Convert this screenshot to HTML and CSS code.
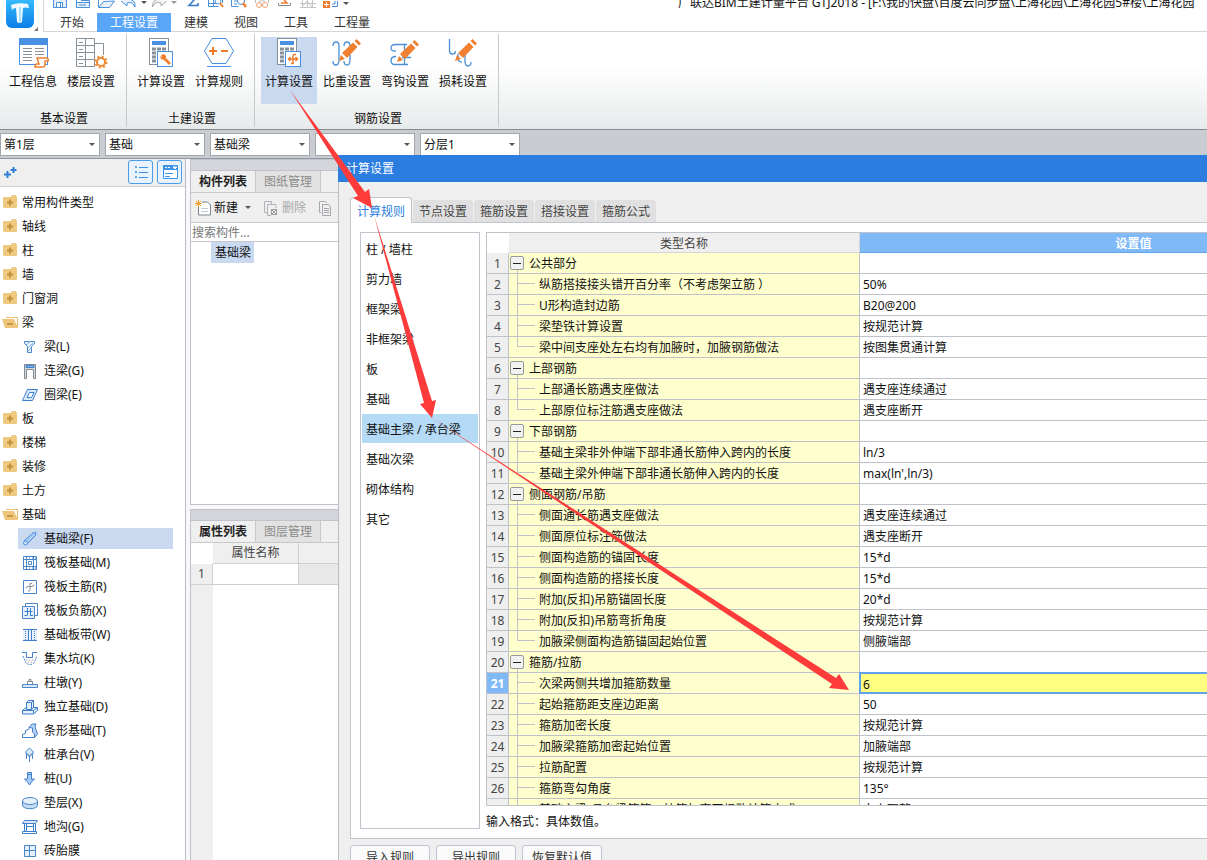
FILE: index.html
```html
<!DOCTYPE html>
<html lang="zh-CN">
<head>
<meta charset="utf-8">
<title>广联达BIM土建计量平台 GTJ2018</title>
<link rel="stylesheet" href="styles.css">
</head>
<body>
<svg class="defs" width="0" height="0" aria-hidden="true">
  <symbol id="folder" viewBox="0 2 18 16"><path d="M10 3l1-1h4l1 2h-6z" fill="#f0cd8b"/><rect x="2" y="4" width="14" height="11" rx="1" fill="#efc97f"/><path d="M9 6.500v6M6 9.500h6" stroke="#c4923a" stroke-width="2"/></symbol>
  <symbol id="folder-open" viewBox="0 2 18 16"><path d="M5 4.500h11.500V14" fill="#fff" stroke="#e9bd6b"/><path d="M1 6h12l4 9H4z" fill="#efc47a"/><path d="M6 11h6" stroke="#b98a3c" stroke-width="1.500"/></symbol>
  <symbol id="pencil" viewBox="0 0 22 22"><path d="M0 22l2-6 4 4z" fill="#f08030"/><path d="M3 14L14 3.500l4.500 4.500L8 19z" fill="#f08030"/><path d="M15.500 2l2-2L22 4.500l-2 2z" fill="#f08030"/></symbol>
  <symbol id="calc" viewBox="0 0 32 32"><rect x="4.500" y="1.500" width="19" height="26" fill="#fff" stroke="#84909a"/><rect x="7" y="4" width="14" height="4" fill="#4a90e2"/><path d="M7 12h14M7 16h10M7 20h6M7 24h6" stroke="#84909a" stroke-width="3" stroke-dasharray="4 1"/></symbol>
</svg>

<div class="app">
  <header>
    <div class="head">
      <div class="logo">
        <svg width="38" height="32" viewBox="0 0 38 32"><defs><linearGradient id="lg" x1="0" y1="0" x2="0" y2="1"><stop offset="0" stop-color="#3cc6ff"/><stop offset="1" stop-color="#0a7ee8"/></linearGradient></defs><rect x="6" y="-5" width="28" height="33" rx="6" fill="url(#lg)"/><path d="M11 5q7-3 17-1l1 4q-4-1-6 0l-1 14q-2 2-5 0l-1-14q-3 0-4 2z" fill="#fff" opacity=".94"/><path d="M20 7v15" stroke="#a9e2ff" stroke-width="2"/><path d="M38 27v4h-4z" fill="#777"/></svg>
      </div>
      <div class="head-main">
        <div class="titlebar">
          <div class="quick">
            <svg width="18" height="9"><path d="M2.500 0v7.500h13V0M5.500 7V2.500h6V7M9.500 3v4" fill="#e6f0fb" stroke="#4a90d9"/></svg>
            <svg width="18" height="9"><path d="M2.500 0v7.500h13V2.500h-13M7 .5h8.500V3M5 5h7" fill="#e6f0fb" stroke="#4a90d9"/></svg>
            <svg width="18" height="9"><path d="M1.500 7.500l5-6 11-.5-5 6.500zM1.500 7V0" fill="#e6f0fb" stroke="#4a90d9"/></svg>
            <svg width="18" height="9"><path d="M1 1l6 5V3q6-2 8 4Q16-1 7-1" fill="#e6f0fb" stroke="#4a90d9"/></svg>
            <svg class="caret" width="6" height="9"><path d="M0 1h6L3 4z" fill="#555"/></svg>
            <svg width="18" height="9"><path d="M17 1l-6 5V3Q5 1 2.500 7Q2-1 11-1" fill="#f3f3f3" stroke="#aaa"/></svg>
            <svg class="caret caret-redo" width="6" height="9"><path d="M0 1h6L3 4z" fill="#999"/></svg>
            <svg width="18" height="9"><path d="M8-3l2 3-5 5.500h9V3" fill="none" stroke="#3979c5" stroke-width="1.600"/></svg>
            <svg width="18" height="9"><path d="M1.500 0v6.500h10M6.500 0v6M1 3.500h8M15.500 0v3" fill="none" stroke="#4a90d9"/><circle cx="11" cy="1" r="3" fill="#fff" stroke="#4a90d9"/><path d="M13 3l3 4" stroke="#ee8030" stroke-width="2"/></svg>
            <svg width="18" height="9"><path d="M1.500 0v6.500h7M4 1h3M4 4h3" fill="none" stroke="#4a90d9"/><circle cx="11" cy="1" r="3.500" fill="#fff" stroke="#4a90d9"/><path d="M13 3l3 4" stroke="#ee8030" stroke-width="2.500"/></svg>
            <svg width="18" height="9"><path d="M2.500 0v3M15.500 0v3M6 1h6" stroke="#bbb"/><circle cx="6" cy="5" r="2.500" fill="#fff" stroke="#f0a070"/><circle cx="12" cy="5" r="2.500" fill="#fff" stroke="#f0a070"/></svg>
            <svg width="18" height="9"><path d="M2.500 3v2.500h12V3" fill="none" stroke="#888"/><path d="M5 3h6L8 0" fill="none" stroke="#ee8030" stroke-width="1.500"/></svg>
            <svg width="18" height="9"><path d="M1 7.500h16M1 3.500h16M3.500 0v8M8.500 0v8M13.500 0v8M3 7l5-6 5 6" fill="none" stroke="#c4c4c4"/></svg>
            <svg width="18" height="9"><rect x="1" y="1" width="7" height="7" fill="#ee7b2d"/><path d="M4.500 2v5M2 4.500h5" stroke="#fff"/><path d="M10 6.500h5.500V1M13 1v3h-3" fill="none" stroke="#4a90d9"/></svg>
            <svg class="caret" width="6" height="9"><path d="M0 2h6L3 5z" fill="#555"/></svg>
          </div>
          <h1>广联达BIM土建计量平台 GTJ2018 - [F:\我的快盘\百度云同步盘\上海花园\上海花园5#楼\上海花园</h1>
        </div>
        <nav class="menu">
          <button>开始</button><button class="active">工程设置</button><button>建模</button><button>视图</button><button>工具</button><button>工程量</button>
        </nav>
      </div>
    </div>
    <div class="ribbon">
      <section>
        <div class="tools">
          <button><svg width="32" height="32"><rect x="2.500" y="1.500" width="28" height="26" fill="#fff" stroke="#4a90e2"/><rect x="2" y="1" width="29" height="7" fill="#4a90e2"/><path d="M6 11.500h9M18 11.500h9M6 14.500h9M18 14.500h9M6 17.500h9M18 17.500h9M6 20.500h9M6 23.500h9" stroke="#8a8f94"/><path d="M20 21h9q3 0 2 3h-3v3q0 3-2 3h-8q0-3 2-3h2z" fill="#fff" stroke="#ee8030" stroke-width="1.500"/></svg>工程信息</button>
          <button><svg width="34" height="32"><path d="M2.500 1.500h18v28h-18zM2 8.500h18M2 15.500h18M2 22.500h18M11.500 2v27M20 6.500h9.500V18" fill="#fff" stroke="#87919a"/><path d="M5 5.500h4M5 12.500h4M5 19.500h4M5 26.500h4" stroke="#87919a"/><circle cx="27" cy="25" r="4" fill="#fff" stroke="#ee8a30" stroke-width="2"/><circle cx="27" cy="25" r="5.500" fill="none" stroke="#ee8a30" stroke-width="2" stroke-dasharray="2 2.300"/></svg>楼层设置</button>
        </div>
        <h2>基本设置</h2>
      </section>
      <section>
        <div class="tools">
          <button><svg width="32" height="32"><use href="#calc"/><rect x="12.500" y="14.500" width="15" height="15" fill="#fff" stroke="#4a90e2"/><path d="M16 18l3-1 2 2v2l5 5-2 2-5-5-3-1-1-3 2 1z" fill="#ee8030"/></svg>计算设置</button>
          <button><svg width="32" height="32"><path d="M9 1.500h14L30.500 14 23 26.500H9L1.500 14z" fill="#fff" stroke="#4a90e2"/><path d="M4 29.500h24" stroke="#4a90e2"/><path d="M6 14h8M10 10v8M18 14h7" stroke="#ee7b2d" stroke-width="2"/></svg>计算规则</button>
        </div>
        <h2>土建设置</h2>
      </section>
      <section>
        <div class="tools">
          <button class="active"><svg width="32" height="32"><use href="#calc"/><rect x="12.500" y="14.500" width="15" height="15" fill="#fff" stroke="#4a90e2"/><path d="M20 18v8M15.500 22h9M17.500 20l-2 2 2 2M22.500 20l2 2-2 2M18 26.500h3M20 17.500h3" fill="none" stroke="#ee7b2d" stroke-width="1.500"/></svg>计算设置</button>
          <button><svg width="32" height="32"><path d="M2 9q0-4 3-4t3 4v14q0 5-3 5t-3-4M13 9q0-4 3-4t3 4v14q0 5-3 5t-3-4" fill="none" stroke="#4a8fd6" stroke-width="1.300"/><use href="#pencil" x="8" y="2" width="22" height="22"/></svg>比重设置</button>
          <button><svg width="32" height="32"><path d="M18 7.500H6q-4 0-4 3.500t5 3M19 27.500H6q-4 0-4-4t5-4M15.500 8v20M13 20.500h9" fill="none" stroke="#4a8fd6" stroke-width="1.300"/><use href="#pencil" x="8" y="3" width="22" height="22"/></svg>弯钩设置</button>
          <button><svg width="32" height="32"><path d="M2.500 2v12q0 3 3 3t3-3M11 17v4q0 4 4 4M18 16v8q0 5 3 5t3-4" fill="none" stroke="#4a8fd6" stroke-width="1.300"/><use href="#pencil" x="8" y="2" width="22" height="22"/></svg>损耗设置</button>
        </div>
        <h2>钢筋设置</h2>
      </section>
    </div>
  </header>

  <div class="filters">
    <label><select aria-label="楼层"><option>第1层</option></select></label>
    <label><select aria-label="类别"><option>基础</option></select></label>
    <label><select aria-label="类型"><option>基础梁</option></select></label>
    <label><select aria-label="构件"><option></option></select></label>
    <label><select aria-label="分层"><option>分层1</option></select></label>
  </div>

  <main>
    <aside class="nav">
      <div class="nav-bar">
        <svg width="16" height="16"><path d="M4.500 7v7M1 10.500h7M10.500 3v6M7.500 6h6" stroke="#2f7fd6" stroke-width="2"/></svg>
        <span class="spring"></span>
        <button aria-label="列表视图" class="on"><svg width="16" height="16"><path d="M6 3.500h9M6 8.500h9M6 13.500h9M2.500 2.500h1v1h-1zM2.500 7.500h1v1h-1zM2.500 12.500h1v1h-1z" fill="none" stroke="#3c93e8"/></svg></button>
        <button aria-label="面板视图" class="on"><svg width="16" height="16"><path d="M1.500 1.500h14v13h-14z" fill="#fff" stroke="#3c93e8"/><path d="M1 1h15v5H1z" fill="#3c93e8"/><path d="M3 3.500h2M6 3.500h2M11 3h4l-2 2z" stroke="#fff" fill="#fff"/><path d="M3 9.500h8M3 12.500h5" stroke="#3c93e8"/></svg></button>
      </div>
      <ul class="tree">
        <li class="group"><svg width="18" height="16"><use href="#folder"/></svg>常用构件类型</li>
        <li class="group"><svg width="18" height="16"><use href="#folder"/></svg>轴线</li>
        <li class="group"><svg width="18" height="16"><use href="#folder"/></svg>柱</li>
        <li class="group"><svg width="18" height="16"><use href="#folder"/></svg>墙</li>
        <li class="group"><svg width="18" height="16"><use href="#folder"/></svg>门窗洞</li>
        <li class="group"><svg width="18" height="16"><use href="#folder-open"/></svg>梁</li>
        <li class="leaf"><svg width="16" height="16"><path d="M2.500 2.500h10v2l-3 3v6h-4v-6l-3-3z" fill="#e6f0fb" stroke="#4a86c8"/><path d="M4 6l5-4M6 9l5-5M6 12l3-3" stroke="#8db5e2"/></svg>梁(L)</li>
        <li class="leaf"><svg width="16" height="16"><path d="M2.500 1.500h11v14h-2V6.500h-7v9h-2z" fill="#d5d9dd" stroke="#848c94"/><path d="M4 2.500h8v2H4z" fill="#8bbcf0" stroke="#3f7fcc"/></svg>连梁(G)</li>
        <li class="leaf"><svg width="16" height="16"><path d="M5.500 2.500h10l-5 11h-10z" fill="#d8e8f9" stroke="#3f7fcc"/><path d="M7.500 5.500h4.500l-2.500 5H5z" fill="#fff" stroke="#3f7fcc"/></svg>圈梁(E)</li>
        <li class="group"><svg width="18" height="16"><use href="#folder"/></svg>板</li>
        <li class="group"><svg width="18" height="16"><use href="#folder"/></svg>楼梯</li>
        <li class="group"><svg width="18" height="16"><use href="#folder"/></svg>装修</li>
        <li class="group"><svg width="18" height="16"><use href="#folder"/></svg>土方</li>
        <li class="group"><svg width="18" height="16"><use href="#folder-open"/></svg>基础</li>
        <li class="leaf active"><svg width="16" height="16"><path d="M2 10L11 2l3-.5-.5 3L5 13z" fill="#a8cdf5" stroke="#4a90e2"/><circle cx="3.500" cy="12" r="2" fill="#d8e8f9" stroke="#4a90e2"/></svg>基础梁(F)</li>
        <li class="leaf"><svg width="16" height="16"><path d="M1.500 1.500h13v13h-13zM4.500 1v14M11.500 1v14M1 4.500h14M1 11.500h14M6.500 6.500h3v3h-3z" fill="none" stroke="#4a86c8"/><path d="M1 3h14M1 13h14" stroke="#4a86c8" stroke-dasharray="1 2"/></svg>筏板基础(M)</li>
        <li class="leaf"><svg width="16" height="16"><path d="M1.500 1.500h13v13h-13z" fill="#fff" stroke="#4a86c8"/><path d="M8 11.500V4.500h2M4 9.500q0-2 2-2h4q2 0 2-2M6 12h2" fill="none" stroke="#8a9299"/></svg>筏板主筋(R)</li>
        <li class="leaf"><svg width="16" height="16"><path d="M3.500 3V.5h12v12H13" fill="none" stroke="#4a86c8"/><path d="M.5 3.500h12v12H.5z" fill="#e6f0fb" stroke="#4a86c8"/><path d="M5.500 5v7M8.500 5v7M2.500 8.500h8M2.500 12.500h3M8 12.500h3" stroke="#3f7fcc"/></svg>筏板负筋(X)</li>
        <li class="leaf"><svg width="16" height="16"><path d="M1 3h14v10H1z" fill="#e6f0fb"/><path d="M1 2.500h14M1 13.500h14M6.500 3v10M9.500 3v10" stroke="#3f7fcc"/><path d="M3.500 4v9M12.500 4v9" stroke="#4a86c8" stroke-dasharray="1 1"/></svg>基础板带(W)</li>
        <li class="leaf"><svg width="16" height="16"><path d="M0 1.500h4.500v5h6v-5H15" fill="none" stroke="#3f7fcc"/><path d="M1 5l3 7q4 3 8 0l3-7" fill="none" stroke="#4a86c8" stroke-dasharray="2 1"/><path d="M4 9h8M6 11h5" stroke="#999" stroke-dasharray="1 2"/></svg>集水坑(K)</li>
        <li class="leaf"><svg width="16" height="16"><path d="M.5 9.500h15v3H.5z" fill="#d8e8f9" stroke="#4a86c8"/><path d="M5.500 9V6.500h5V9M7 6V4.500h2V6" fill="none" stroke="#888"/></svg>柱墩(Y)</li>
        <li class="leaf"><svg width="16" height="16"><path d="M.5 11.500l3.500-3h11.500v3l-4 3.500H.5z" fill="#e6f0fb" stroke="#3f7fcc"/><path d="M4.500 3.500l2-2h5v7l-2 2h-5z" fill="#e6f0fb" stroke="#3f7fcc"/><path d="M4.500 3.500h5v7l2-2v-7l-2 2M.5 11.500h11v3M11.500 11.500l4-3" fill="none" stroke="#3f7fcc"/></svg>独立基础(D)</li>
        <li class="leaf"><svg width="16" height="16"><path d="M7 4.500L10 1h4l-1 3 2.500 7-3.500 4z" fill="#b9d4f3" stroke="#3f7fcc"/><path d="M.5 14.500v-3l3-1v-3l3-1 1-2 3 .5v4l2 2v3.500z" fill="#fff" stroke="#3f7fcc"/></svg>条形基础(T)</li>
        <li class="leaf"><svg width="16" height="16"><path d="M7.500 1l4 4-4 4-4-4z" fill="#d8e8f9" stroke="#4a86c8"/><path d="M7.500 9v6M4.500 7v5M10.500 7v5M3.500 6l4 4 4-4" fill="none" stroke="#4a86c8"/></svg>桩承台(V)</li>
        <li class="leaf"><svg width="16" height="16"><path d="M5.500 1.500h4v6.500h3l-3 3-2 3-2-3-3-3h3z" fill="#a8cdf5" stroke="#3f7fcc"/><path d="M5.500 3.500h4v5" fill="none" stroke="#3f7fcc"/></svg>桩(U)</li>
        <li class="leaf"><svg width="16" height="16"><path d="M.5 6v4c0 5 15 5 15 0V6" fill="#c5dcf5" stroke="#4a86c8"/><ellipse cx="8" cy="6" rx="7.500" ry="3.500" fill="#e6f0fb" stroke="#4a86c8"/></svg>垫层(X)</li>
        <li class="leaf"><svg width="16" height="16"><path d="M2.500 1.500h13l-2 3H.5z" fill="#d8e8f9" stroke="#3f7fcc"/><path d="M2.500 5v8M4.500 5v8M11.500 5v8M13.500 5v8M.5 12.500h14v2H.5zM5 7.500h6" fill="none" stroke="#3f7fcc"/></svg>地沟(G)</li>
        <li class="leaf"><svg width="16" height="16"><path d="M2.500 2.500h11v11h-11zM7.500 3v10M3 7.500h10" fill="#e6f0fb" stroke="#4a86c8"/></svg>砖胎膜</li>
      </ul>
    </aside>

    <div class="docks">
      <section class="dock dock-list">
        <div class="dock-grip"></div>
        <div class="dock-tabs"><button class="active">构件列表</button><button>图纸管理</button></div>
        <div class="dock-tools">
          <button><svg width="16" height="16"><path d="M3.500 5v10h12V5l-3-3H7" fill="#fff" stroke="#7d8790"/><path d="M6 8.500h7M6 11.500h7" stroke="#c8ccd0"/><path d="M1 1l5 5M6 1L1 6M3.500 0v7M0 3.500h7" stroke="#f0a030"/></svg>新建<span class="down"></span></button>
          <button disabled><svg width="16" height="16"><path d="M4 12.500H1.500v-11h7V4" fill="none" stroke="#b0b4b8"/><path d="M13 8V4.500H4.500v11H8" fill="none" stroke="#b0b4b8"/><path d="M8 9l6 6M14 9l-6 6M8.500 9.500h5v5h-5z" fill="none" stroke="#a0a0a0"/></svg>删除</button>
          <button disabled aria-label="复制"><svg width="16" height="16"><path d="M3 12.500H1.500v-11h6L9 3" fill="none" stroke="#a4a8ac"/><path d="M4.500 4.500h6l2 2v9h-8zM6 8.500h5M6 10.500h5M6 12.500h5" fill="none" stroke="#a4a8ac"/></svg></button>
        </div>
        <input class="search" placeholder="搜索构件..." aria-label="搜索构件">
        <div class="results"><span>基础梁</span></div>
      </section>
      <section class="dock dock-props">
        <div class="dock-grip"></div>
        <div class="dock-tabs"><button class="active">属性列表</button><button>图层管理</button></div>
        <table class="props">
          <thead><tr><td class="corner"></td><th>属性名称</th><th></th></tr></thead>
          <tbody><tr><th>1</th><td></td><td class="shade"></td></tr><tr class="rest"><th></th><td colspan="2"></td></tr></tbody>
        </table>
      </section>
    </div>
  </main>

  <section class="dialog" role="dialog" aria-label="计算设置">
    <div class="dialog-title">计算设置</div>
    <div class="dialog-body">
      <div class="tabs"><button class="active">计算规则</button><button>节点设置</button><button>箍筋设置</button><button>搭接设置</button><button>箍筋公式</button></div>
      <div class="panel">
        <ul class="cats"><li>柱 / 墙柱</li><li>剪力墙</li><li>框架梁</li><li>非框架梁</li><li>板</li><li>基础</li><li class="active">基础主梁 / 承台梁</li><li>基础次梁</li><li>砌体结构</li><li>其它</li></ul>
        <div class="rules">
          <div class="grid-wrap">
            <table class="grid">
              <colgroup><col class="c-num"><col class="c-name"><col class="c-val"></colgroup>
              <thead><tr><td></td><th>类型名称</th><th class="sel">设置值</th></tr></thead>
              <tbody>
                <tr class="g"><th>1</th><td><button aria-label="折叠"></button>公共部分</td><td></td></tr>
                <tr><th>2</th><td>纵筋搭接接头错开百分率（不考虑架立筋 ）</td><td>50%</td></tr>
                <tr><th>3</th><td>U形构造封边筋</td><td>B20@200</td></tr>
                <tr><th>4</th><td>梁垫铁计算设置</td><td>按规范计算</td></tr>
                <tr class="last"><th>5</th><td>梁中间支座处左右均有加腋时，加腋钢筋做法</td><td>按图集贯通计算</td></tr>
                <tr class="g"><th>6</th><td><button aria-label="折叠"></button>上部钢筋</td><td></td></tr>
                <tr><th>7</th><td>上部通长筋遇支座做法</td><td>遇支座连续通过</td></tr>
                <tr class="last"><th>8</th><td>上部原位标注筋遇支座做法</td><td>遇支座断开</td></tr>
                <tr class="g"><th>9</th><td><button aria-label="折叠"></button>下部钢筋</td><td></td></tr>
                <tr><th>10</th><td>基础主梁非外伸端下部非通长筋伸入跨内的长度</td><td>ln/3</td></tr>
                <tr class="last"><th>11</th><td>基础主梁外伸端下部非通长筋伸入跨内的长度</td><td>max(ln',ln/3)</td></tr>
                <tr class="g"><th>12</th><td><button aria-label="折叠"></button>侧面钢筋/吊筋</td><td></td></tr>
                <tr><th>13</th><td>侧面通长筋遇支座做法</td><td>遇支座连续通过</td></tr>
                <tr><th>14</th><td>侧面原位标注筋做法</td><td>遇支座断开</td></tr>
                <tr><th>15</th><td>侧面构造筋的锚固长度</td><td>15*d</td></tr>
                <tr><th>16</th><td>侧面构造筋的搭接长度</td><td>15*d</td></tr>
                <tr><th>17</th><td>附加(反扣)吊筋锚固长度</td><td>20*d</td></tr>
                <tr><th>18</th><td>附加(反扣)吊筋弯折角度</td><td>按规范计算</td></tr>
                <tr class="last"><th>19</th><td>加腋梁侧面构造筋锚固起始位置</td><td>侧腋端部</td></tr>
                <tr class="g"><th>20</th><td><button aria-label="折叠"></button>箍筋/拉筋</td><td></td></tr>
                <tr class="current"><th>21</th><td>次梁两侧共增加箍筋数量</td><td><input value="6" aria-label="次梁两侧共增加箍筋数量"></td></tr>
                <tr><th>22</th><td>起始箍筋距支座边距离</td><td>50</td></tr>
                <tr><th>23</th><td>箍筋加密长度</td><td>按规范计算</td></tr>
                <tr><th>24</th><td>加腋梁箍筋加密起始位置</td><td>加腋端部</td></tr>
                <tr><th>25</th><td>拉筋配置</td><td>按规范计算</td></tr>
                <tr><th>26</th><td>箍筋弯勾角度</td><td>135°</td></tr>
                <tr><th>27</th><td>基础主梁/承台梁箍筋、拉筋加密区根数计算方式</td><td>向上取整+1</td></tr>
              </tbody>
            </table>
          </div>
          <p class="hint">输入格式：具体数值。</p>
        </div>
      </div>
      <div class="actions"><button>导入规则</button><button>导出规则</button><button>恢复默认值</button></div>
    </div>
  </section>

  <svg class="arrows" width="860" height="700" viewBox="0 0 860 700" fill="#fc3b3a" aria-hidden="true">
    <path d="M290 90L365 192l4-3 3 19-19-10 5-2z"/>
    <path d="M374 215L432 401l4-1-4 18-12-14 4-1z"/>
    <path d="M432 418L836 678l3-4 10 16-20-2 3-4z"/>
  </svg>
</div>
</body>
</html>
```
FILE: styles.css
```css
* { box-sizing: border-box; }
body, h1, h2, p, ul { margin: 0; padding: 0; }
body, button, input, select { font: 12px/16px "Noto Sans", "Noto Sans CJK SC", sans-serif; color: #111; }
ul { list-style: none; }
button { padding: 0; border: 0; background: none; white-space: nowrap; }
svg { flex: none; }
.defs { position: absolute; }

.app { position: relative; display: flex; flex-direction: column; height: 100vh; overflow: hidden; background: #fff; }

/* title, menu */
.head { display: flex; height: 32px; }
.logo { width: 43px; flex: none; }
.head-main { flex: 1; min-width: 0; border-left: 1px solid #d5d5d5; border-bottom: 1px solid #d5d5d5; }
.titlebar { display: flex; align-items: flex-end; justify-content: space-between; height: 13px; overflow: hidden; }
.quick { display: flex; gap: 5px; padding-left: 7px; align-self: flex-start; }
.quick .caret { margin: 0 -2px; }
.quick .caret-redo { margin-right: 2px; }
h1 { width: 529px; font-size: 12px; font-weight: 400; white-space: nowrap; padding-bottom: 2px; }
.menu { display: flex; padding-left: 3px; }
.menu button { height: 19px; padding: 0 13px; color: #333; }
.menu .active { background: #59a5f8; color: #fff; }

/* ribbon */
.ribbon { display: flex; height: 97px; padding-top: 2px; background: linear-gradient(#fff 35%, #e7eaeb); }
.ribbon section { display: flex; flex-direction: column; justify-content: space-between; padding: 3px 7px 0 6px; margin-bottom: 2px; border-right: 1px solid #c6cacd; }
.ribbon section:first-child { padding-left: 5px; }
.tools { display: flex; gap: 2px; }
.tools button { display: flex; flex-direction: column; align-items: center; gap: 5px; width: 56px; height: 67px; }
.tools .active { background: #c8d9f0; }
h2 { padding-left: 4px; font-size: 12px; font-weight: 400; text-align: center; }

/* filter row */
.filters { display: flex; flex: none; gap: 5px; height: 30px; padding-top: 3px; background: #c9cdd2; border-top: 1px solid #868b92; border-bottom: 1px solid #9095a0; }
.filters label { position: relative; width: 100px; height: 23px; }
.filters select { appearance: none; width: 100%; height: 100%; padding: 0 3px; border: 1px solid #a4a8ae; border-radius: 0; background: #fff; }
.filters label::after { content: ""; position: absolute; right: 5px; top: 10px; border: 3px solid transparent; border-top-color: #555; border-bottom: 0; }

main { display: flex; flex: 1; min-height: 0; gap: 4px; background: #f8f8f8; }

/* component tree */
.nav { width: 186px; flex: none; background: #fff; border-right: 1px solid #b9bcc2; overflow: hidden; }
.nav-bar { display: flex; align-items: center; gap: 4px; height: 28px; padding: 0 3px 2px; background: #efefef; border-bottom: 1px solid #cfcfcf; }
.spring { flex: 1; }
.nav-bar .on { display: grid; place-items: center; width: 25px; height: 24px; border: 1px solid #4a9cec; border-radius: 3px; background: #e9f3fd; }
.tree { display: flex; flex-direction: column; padding-top: 3px; }
.tree li { display: flex; flex: none; align-items: center; }
.group { height: 24px; gap: 3px; padding: 2px 0 0 1px; }
.leaf { height: 21px; margin: 2px 12px 1px 18px; gap: 6px; padding-left: 4px; }
.tree .active { background: #c9d9f0; }

/* docked panels */
.docks { display: flex; flex-direction: column; gap: 4px; width: 149px; }
.dock { display: flex; flex-direction: column; border: 1px solid #c0c3ca; border-right: 0; background: #fff; overflow: hidden; }
.dock-list { flex: 0 0 346px; }
.dock-props { flex: 1; border-bottom: 0; }
.dock-grip { flex: none; height: 11px; background: #d4d6dc; border-bottom: 1px solid #c0c3ca; }
.dock-tabs { display: flex; flex: none; height: 22px; background: #efefef; border-bottom: 1px solid #c6c8cc; }
.dock-tabs button { width: 65px; background: #e2e2e2; color: #8b8b8b; border-right: 1px solid #c6c8cc; }
.dock-tabs .active { background: #efefef; color: #222; font-weight: 700; }
.dock-tools { display: flex; flex: none; align-items: center; gap: 12px; height: 30px; padding-left: 4px; background: #efefef; border-bottom: 1px solid #c6c8cc; }
.dock-tools button { display: flex; align-items: center; gap: 3px; }
.dock-tools button:disabled { color: #a8a8a8; }
.down { margin-left: 4px; border: 3px solid transparent; border-top-color: #555; border-bottom: 0; }
.search { flex: none; height: 19px; padding: 0 1px; border: 0; border-bottom: 1px solid #c6c8cc; }
.search::placeholder { color: #777; }
.results { padding-left: 20px; }
.results span { display: inline-block; padding: 3px 3px 2px 4px; background: #c9d9f0; }
.props { flex: 1; border-spacing: 0; table-layout: fixed; width: 100%; }
.props th { background: #efefef; font-weight: 400; color: #444; }
.props th, .props td { padding: 0; height: 21px; border-right: 1px solid #cdcfd3; border-bottom: 1px solid #cdcfd3; }
.props tr > :first-child { width: 22px; }
.props tr > :nth-child(2) { width: 86px; }
.props .corner { border: 0; }
.props .shade { background: #e8e8e8; }
.props .rest > * { height: auto; border: 0; }

/* settings window */
.dialog { position: absolute; left: 338px; right: 0; top: 155px; bottom: -14px; display: flex; flex-direction: column; background: #efefef; overflow: hidden; }
.dialog-title { flex: none; height: 27px; padding: 6px 8px; background: #2b7ee0; color: #fff; }
.dialog-body { display: flex; flex: 1; flex-direction: column; min-height: 0; padding: 15px 0 3px 11px; border-left: 1px solid #b9bcc2; }
.tabs { display: flex; flex: none; align-items: flex-end; gap: 1px; height: 26px; padding-bottom: 1px; margin-bottom: -1px; }
.tabs button { width: 60px; height: 22px; padding-top: 2px; background: #e0e0e0; border-radius: 3px 3px 0 0; color: #444; }
.tabs .active { position: relative; width: 62px; height: 26px; margin-bottom: -1px; background: #fff; border: 1px solid #c0c4cc; border-bottom: 0; color: #2b7ee0; }
.panel { display: flex; flex: 1; gap: 6px; min-height: 0; padding: 9px 0 9px 9px; background: #fff; border: 1px solid #c0c4cc; border-right: 0; }
.cats { flex: none; width: 120px; padding: 1px; border: 1px solid #c0c4cc; }
.cats li { height: 29px; margin-bottom: 1px; padding: 8px 4px 5px; white-space: nowrap; }
.cats .active { background: #b4daf6; }
.rules { display: flex; flex: 1; flex-direction: column; min-width: 0; }
.grid-wrap { flex: 1; min-height: 0; overflow: hidden; border: 1px solid #bfc2c8; border-right: 0; }
.grid { width: 921px; table-layout: fixed; border-spacing: 0; }
.c-num { width: 22px; }
.c-name { width: 351px; }
.grid th, .grid td { height: 21px; padding: 2px 3px 0; line-height: 16px; white-space: nowrap; border-right: 1px solid #bfc2c8; border-bottom: 1px solid #bfc2c8; }
.grid th { padding: 2px 0 0; background: #efefef; color: #444; font-weight: 400; text-align: center; }
.grid thead th, .grid thead td { height: 20px; border-color: #d5d5d5; }
.grid thead td { border: 0; }
.grid thead .sel { background: #80b9f8; border-color: #5fa3ec; color: #fff; font-weight: 700; }
.grid tbody td:nth-child(2) {
  padding-left: 30px;
  background: linear-gradient(#bfc2c8, #bfc2c8) 8px 0 / 1px 100% no-repeat, linear-gradient(#bfc2c8, #bfc2c8) 8px 9px / 18px 1px no-repeat, #ffffce;
}
.grid .last td:nth-child(2) { background-size: 1px 9px, 18px 1px, auto; }
.grid .g td:nth-child(2) { padding-left: 1px; background: linear-gradient(#bfc2c8, #bfc2c8) 8px 17px / 1px 4px no-repeat, #ffffce; }
.g button { width: 14px; height: 14px; margin-right: 5px; vertical-align: top; border: 1px solid #999; border-radius: 2px; background: linear-gradient(#222, #222) center / 8px 1px no-repeat, #f2f2f2; }
.grid .current th { background: #80b9f8; color: #fff; font-weight: 700; }
.grid .current td:last-child { padding: 0; }
.current input { display: block; width: 100%; height: 20px; padding: 2px 3px 0; border: 0; background: #ffff80; box-shadow: inset 0 0 0 1px #5fa3ec, 0 0 0 1px #5fa3ec; }
.hint { flex: none; padding: 8px 0 0; height: 23px; }
.actions { display: flex; flex: none; gap: 6px; padding-top: 6px; }
.actions button { width: 80px; height: 26px; border: 1px solid #bfc6d6; border-radius: 3px; background: #fafafa; color: #333; }

.arrows { position: absolute; left: 0; top: 0; pointer-events: none; }
```
